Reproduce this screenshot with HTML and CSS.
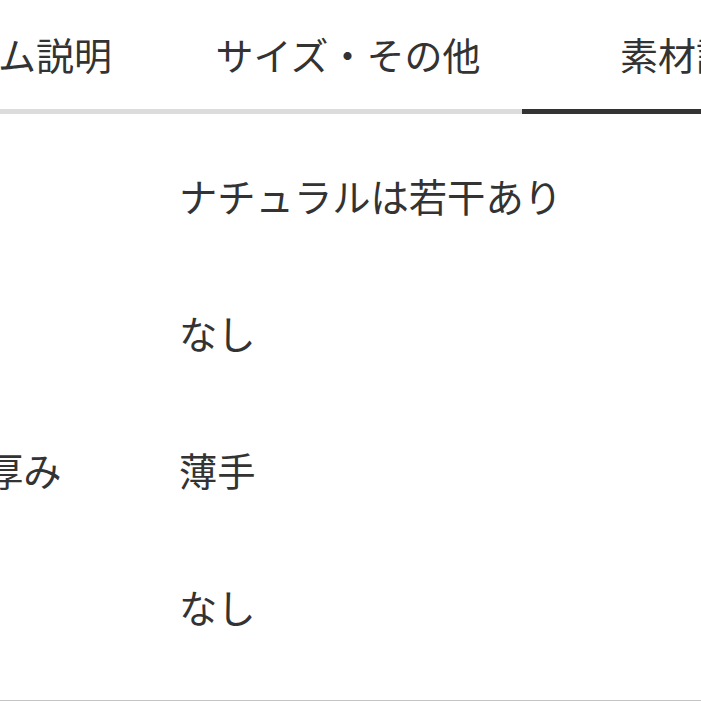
FILE: index.html
```html
<!DOCTYPE html>
<html lang="ja">
<head>
<meta charset="utf-8">
<link rel="stylesheet" href="styles.css">
</head>
<body>
<div class="page">
  <nav class="tabs">
    <div class="tab">アイテム説明</div>
    <div class="tab">サイズ・その他</div>
    <div class="tab active">素材説明</div>
  </nav>
  <div class="spec">
    <div class="row"><div class="label"></div><div class="value">ナチュラルは若干あり</div></div>
    <div class="row"><div class="label"></div><div class="value">なし</div></div>
    <div class="row"><div class="label">厚み</div><div class="value">薄手</div></div>
    <div class="row"><div class="label"></div><div class="value">なし</div></div>
  </div>
</div>
</body>
</html>
```

FILE: styles.css
```css
html, body {
  margin: 0;
  padding: 0;
  background: #fff;
}
body {
  width: 701px;
  height: 701px;
  overflow: hidden;
  font-family: "Noto Sans CJK JP", "Noto Sans", sans-serif;
  color: #333;
}
.page {
  width: 701px;
  overflow: hidden;
}
.tabs {
  display: flex;
  margin-left: -174px;
  width: 1044px;
}
.tab {
  flex: 0 0 348px;
  height: 114px;
  display: flex;
  align-items: center;
  justify-content: center;
  font-size: 38px;
  line-height: 1;
  padding-bottom: 2px;
  box-sizing: border-box;
  border-bottom: 5px solid #dcdcdc;
}
.tab.active {
  border-bottom-color: #333;
}
.spec {
  padding: 14px 0 24px;
  border-bottom: 1px solid #c4c4c4;
}
.row {
  display: grid;
  grid-template-columns: 194px 1fr;
  margin-left: -15px;
  height: 137px;
  align-items: center;
  font-size: 38.3px;
  line-height: 1;
}
.label, .value {
  white-space: nowrap;
}
```
